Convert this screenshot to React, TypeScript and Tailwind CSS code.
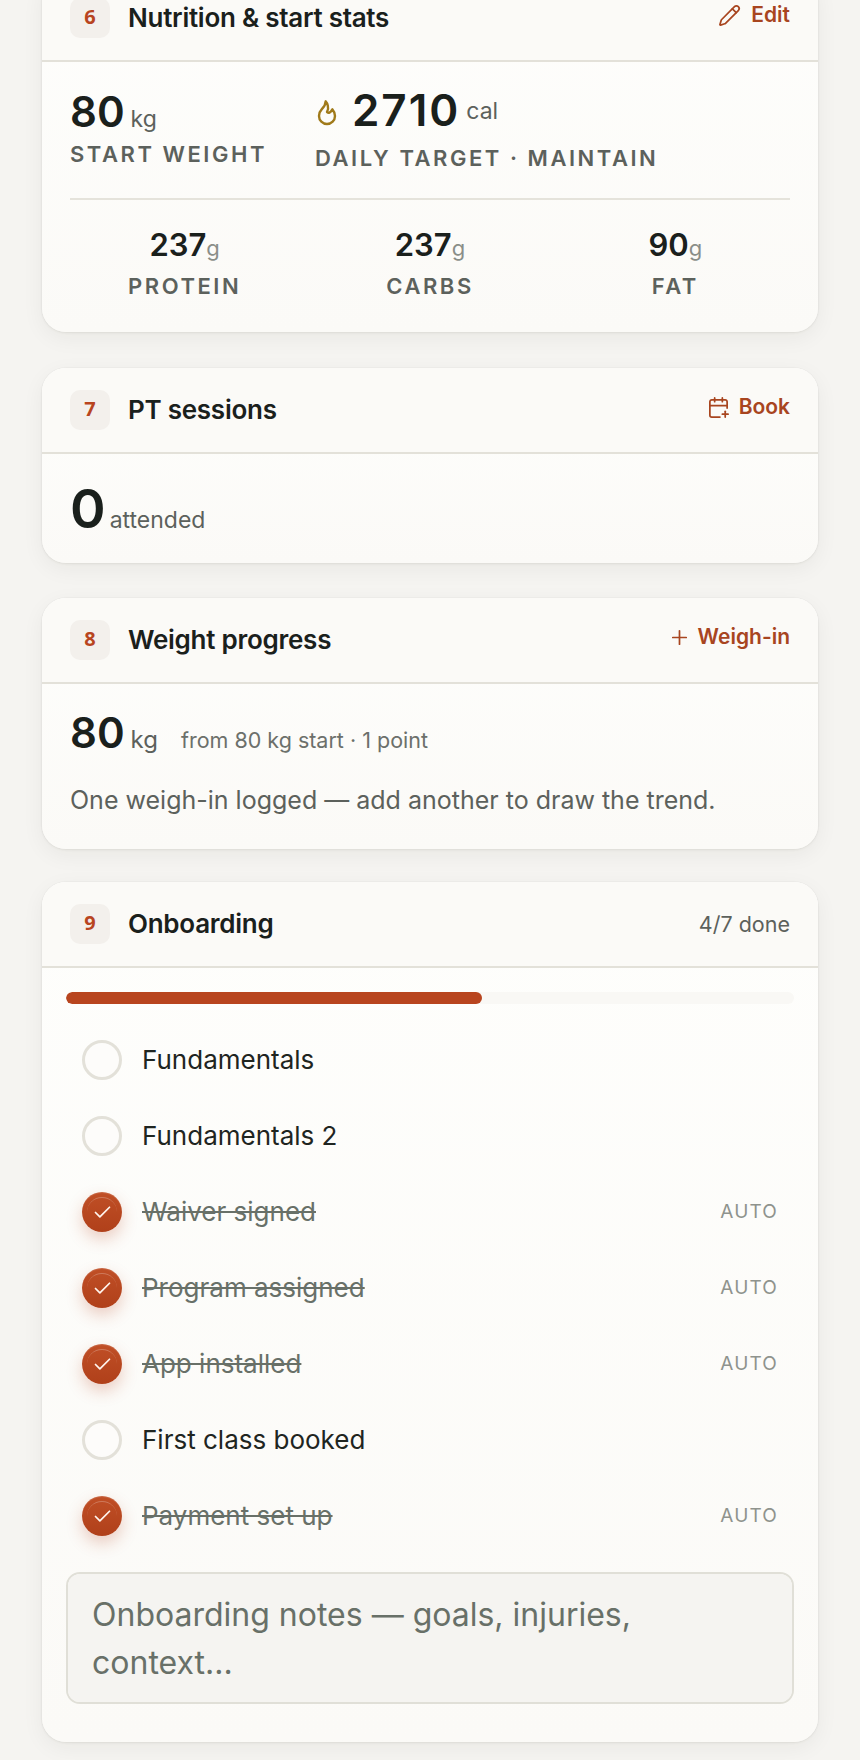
import { Pencil, CalendarPlus, Plus, Check } from "lucide-react";
import type { ReactNode } from "react";

const font = { fontFamily: "Inter, 'Liberation Sans', sans-serif" };

function Card({ n, title, right, children, className = "" }: { n: number; title: string; right: ReactNode; children: ReactNode; className?: string }) {
  return (
    <section className={`rounded-[24px] bg-gradient-to-b from-[#fefefc] to-[#fbfaf7] shadow-[0_0_0_1px_rgba(60,60,40,0.02),0_6px_22px_rgba(30,30,20,0.055),0_1px_3px_rgba(30,30,20,0.06)] overflow-hidden ${className}`}>
      <header className="flex items-center h-[86px] px-[28px] bg-[#fbfaf7] border-b-2 border-[#e3e1d9]">
        <span className="flex items-center justify-center w-[40px] h-[40px] rounded-[10px] bg-[#f3f0ec] pb-[2px] font-['Noto_Sans',sans-serif] text-[#b8451f] text-[20px] font-bold">{n}</span>
        <h2 className="ml-[18px] -mt-[2px] text-[26px] font-semibold text-[#1a201c] tracking-[-0.01em]">{title}</h2>
        <div className="ml-auto -mt-[6px]">{right}</div>
      </header>
      {children}
    </section>
  );
}

function Action({ icon, label, gap }: { icon: ReactNode; label: string; gap: string }) {
  return (
    <span className={`flex items-center ${gap} text-[21px] font-semibold text-[#a8451f]`}>
      {icon}
      {label}
    </span>
  );
}

function FlameIcon() {
  return (
    <svg viewBox="0 0 24 24" fill="none" stroke="currentColor" strokeWidth={1.8} strokeLinecap="round" strokeLinejoin="round" className="-ml-[4px] mt-[3px] w-[32px] h-[32px] text-[#a07a1a]">
      <path d="M12 12c2 -2.96 0 -7 -1 -8c0 3.038 -1.773 4.741 -3 6c-1.226 1.26 -2 3.24 -2 5a6 6 0 1 0 12 0c0 -1.532 -1.056 -3.94 -2 -5c-1.786 3 -2.791 3 -4 2z" />
    </svg>
  );
}

function Macro({ v, l }: { v: string; l: string }) {
  return (
    <div className="flex flex-col items-center">
      <div className="flex items-baseline leading-[38px]">
        <span className="text-[31px] font-semibold text-[#1a201c]">{v}</span>
        <span className="text-[22px] text-[#8a8e88]">g</span>
      </div>
      <span className="mt-[5px] text-[22px] font-semibold tracking-[0.115em] text-[#5c615c] leading-[28px]">{l}</span>
    </div>
  );
}

function Item({ label, done }: { label: string; done?: boolean }) {
  return (
    <li className="flex items-center h-[76px] px-[16px]">
      {done ? (
        <span className="relative flex items-center justify-center w-[40px] h-[40px] rounded-full bg-gradient-to-b from-[#c04f26] to-[#b0401a] shadow-[0_7px_16px_rgba(184,69,31,0.25),inset_0_1px_1px_rgba(255,255,255,0.15)]">
          <span className="absolute inset-[5px] rounded-full border-t border-[#ffffff40]" />
          <Check className="w-[21px] h-[21px] text-[#fff5ee]" strokeWidth={2} />
        </span>
      ) : (
        <span className="w-[40px] h-[40px] rounded-full border-[3px] border-[#e3e1d9] bg-[#fdfcfa]" />
      )}
      <span className={`ml-[20px] -mt-[2px] text-[26px] ${done ? "text-[#687068] line-through" : "text-[#1f2521]"}`}>{label}</span>
      {done && <span className="ml-auto text-[19px] tracking-[0.06em] text-[#8f938d]">AUTO</span>}
    </li>
  );
}

export default function App() {
  return (
    <div style={font} className="h-[1760px] overflow-hidden bg-[#f5f4f1] px-[42px]">
      <div className="-mt-[24px] flex flex-col">
        <Card n={6} title="Nutrition & start stats" right={<Action gap="gap-[10px]" label="Edit" icon={<Pencil className="w-[23px] h-[23px]" strokeWidth={1.8} />} />}>
          <div className="px-[28px] pt-[24px] pb-[32px]">
            <div className="flex pb-[26px] border-b-2 border-[#e5e3db]">
              <div>
                <div className="flex items-baseline">
                  <span className="text-[42px] font-semibold leading-[52px] text-[#1a201c]">80</span>
                  <span className="ml-[6px] text-[23px] text-[#5c615c]">kg</span>
                </div>
                <div className="mt-[2px] text-[22px] font-semibold tracking-[0.115em] text-[#5c615c] leading-[28px]">START WEIGHT</div>
              </div>
              <div className="ml-[48px] -mt-[2px]">
                <div className="flex items-center">
                  <FlameIcon />
                  <span className="ml-[9px] text-[44px] font-semibold leading-[52px] tracking-[0.045em] text-[#1a201c]">2710</span>
                  <span className="ml-[6px] mt-[2px] text-[23px] text-[#5c615c]">cal</span>
                </div>
                <div className="mt-[8px] text-[22px] font-semibold tracking-[0.115em] text-[#5c615c] leading-[28px]">DAILY TARGET · MAINTAIN</div>
              </div>
            </div>
            <div className="grid grid-cols-3 gap-4 pt-[26px]">
              <Macro v="237" l="PROTEIN" />
              <Macro v="237" l="CARBS" />
              <Macro v="90" l="FAT" />
            </div>
          </div>
        </Card>

        <Card className="mt-[36px]" n={7} title="PT sessions" right={<Action gap="gap-[9px]" label="Book" icon={<CalendarPlus className="w-[23px] h-[23px]" strokeWidth={1.8} />} />}>
          <div className="flex items-baseline px-[28px] pt-[23px] pb-[22px]">
            <span className="text-[54px] font-semibold leading-[64px] text-[#1a201c]">0</span>
            <span className="ml-[4px] text-[23px] text-[#5c615c]">attended</span>
          </div>
        </Card>

        <Card className="mt-[35px]" n={8} title="Weight progress" right={<Action gap="gap-[7px]" label="Weigh-in" icon={<Plus className="w-[23px] h-[23px]" strokeWidth={1.8} />} />}>
          <div className="px-[28px] pt-[23px] pb-[32px]">
            <div className="flex items-baseline">
              <span className="text-[42px] font-semibold leading-[52px] text-[#1a201c]">80</span>
              <span className="ml-[6px] text-[24px] text-[#5c615c]">kg</span>
              <span className="ml-[23px] text-[21.5px] text-[#6c706b]">from 80 kg start · 1 point</span>
            </div>
            <p className="mt-[24px] text-[25px] text-[#5c615c] leading-[34px]">One weigh-in logged — add another to draw the trend.</p>
          </div>
        </Card>

        <Card className="mt-[33px]" n={9} title="Onboarding" right={<span className="block mt-[6px] text-[21.5px] text-[#5c615c]">4/7 done</span>}>
          <div className="px-[24px] pt-[24px] pb-[38px]">
            <div className="h-[12px] rounded-full bg-[#f9f8f5] overflow-hidden">
              <div className="h-full w-[57.14%] rounded-full bg-[#b8451f]" />
            </div>
            <ul className="mt-[18px]">
              <Item label="Fundamentals" />
              <Item label="Fundamentals 2" />
              <Item label="Waiver signed" done />
              <Item label="Program assigned" done />
              <Item label="App installed" done />
              <Item label="First class booked" />
              <Item label="Payment set up" done />
            </ul>
            <textarea
              readOnly
              rows={2}
              placeholder="Onboarding notes — goals, injuries, context..."
              style={font}
              className="block mt-[18px] w-full h-[132px] resize-none rounded-[14px] border-2 border-[#e0dfd7] bg-[#f5f4f1] px-[24px] py-[17px] text-[32px] leading-[48px] text-[#1a201c] placeholder:text-[#687068] outline-none"
            />
          </div>
        </Card>
      </div>
    </div>
  );
}
